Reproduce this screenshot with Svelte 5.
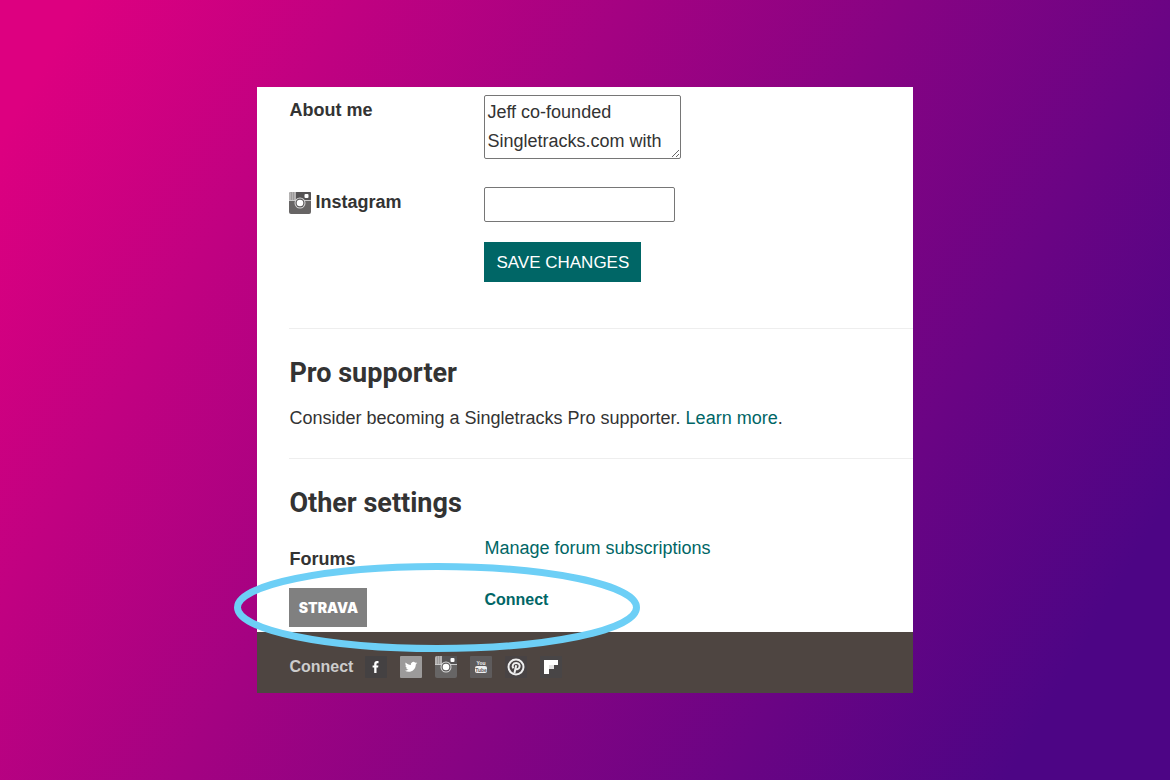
<script lang="ts">
  let about = $state("Jeff co-founded\nSingletracks.com with");
  let instagram = $state("");

  const socialLinks = [
    { id: "facebook", label: "Facebook" },
    { id: "twitter", label: "Twitter" },
    { id: "instagram", label: "Instagram" },
    { id: "youtube", label: "YouTube" },
    { id: "pinterest", label: "Pinterest" },
    { id: "flipboard", label: "Flipboard" },
  ];

  function save(event: SubmitEvent) {
    event.preventDefault();
  }
</script>

{#snippet icon(id: string)}
  <svg class="icon" viewBox="0 0 22 22" aria-hidden="true">
    {#if id === "facebook"}
      <rect width="22" height="22" rx="1" fill="#444142" />
      <path
        d="M9.2 17v-5.600H7.600V9.400h1.600V8c0-2 1.100-3 2.800-3h1.500v2.200h-1c-.7 0-1 .4-1 1v1.200h1.900l-.3 2h-1.600V17z"
        fill="#fff"
      />
    {:else if id === "twitter"}
      <rect width="22" height="22" rx="1" fill="#9c9a9a" />
      <path
        d="M17.200 7.100c-.5.2-1 .4-1.500.4.5-.3.9-.8 1.100-1.400-.5.3-1 .5-1.600.6a2.500 2.500 0 0 0-4.300 2.300C8.800 8.900 7 7.900 5.700 6.400c-.7 1.200-.3 2.600.8 3.300-.4 0-.8-.1-1.100-.3 0 1.200.8 2.200 2 2.500-.4.1-.8.1-1.100 0 .3 1 1.200 1.700 2.300 1.700-1 .8-2.300 1.200-3.700 1.100 4.800 2.900 10.900-.2 10.900-6.200.6-.4 1.100-.8 1.400-1.400z"
        fill="#fff"
      />
    {:else if id === "instagram"}
      <rect width="22" height="22" rx="2" fill="#676565" />
      <path d="M0 8V2a2 2 0 0 1 2-2h5v8z" fill="#b5b3b3" />
      <path d="M2.500 0v8M4.500 0v8" stroke="#9c9a9a" />
      <rect x="7" width="15" height="8" rx="1" fill="#555354" />
      <rect x="15.500" y="2" width="4" height="4" rx="1" fill="#fff" />
      <path d="M0 8.500h22" stroke="#ccc" />
      <circle cx="11" cy="11" r="5.500" fill="#d8d8d8" />
      <circle cx="11" cy="11" r="4.500" fill="#5c5a5b" />
      <circle cx="11" cy="11" r="3.300" fill="#fff" />
    {:else if id === "youtube"}
      <rect width="22" height="22" rx="1" fill="#5e5b5c" />
      <text x="11" y="9" class="you">You</text>
      <rect x="5" y="10" width="12" height="7" rx="2" fill="#eee" />
      <text x="11" y="15.500" class="tube">Tube</text>
    {:else if id === "pinterest"}
      <rect width="22" height="22" rx="1" fill="#484344" />
      <circle cx="11" cy="11" r="7.500" fill="none" stroke="#eee" stroke-width="2" />
      <path
        d="M8.500 12.200c-1.900-2-.5-5.200 2.700-5.200 2.500 0 3.900 1.900 3.300 4-.6 2.300-3.100 3-4 1.500M11.200 9.300 9.400 17.200"
        fill="none"
        stroke="#eee"
        stroke-width="2"
      />
    {:else}
      <rect width="22" height="22" rx="1" fill="#484546" />
      <path d="M4 4h14v5h-4v4H9v5H4z" fill="#fff" />
      <path d="M9 9h5v4H9z" fill="#e4e3e3" />
    {/if}
  </svg>
{/snippet}

<main class="page">
  <div class="card">
    <div class="settings">
      <form class="profile" onsubmit={save}>
        <label class="field-label" for="about">About me</label>
        <textarea id="about" rows="2" bind:value={about}></textarea>

        <label class="field-label instagram-label" for="instagram">
          {@render icon("instagram")}
          Instagram
        </label>
        <input id="instagram" type="text" bind:value={instagram} />

        <button class="save" type="submit">SAVE CHANGES</button>
      </form>

      <section class="supporter">
        <h2>Pro supporter</h2>
        <p>
          Consider becoming a Singletracks Pro supporter. <a href="#pro">Learn more</a>.
        </p>
      </section>

      <section>
        <h2>Other settings</h2>
        <div class="row">
          <strong class="forums">Forums</strong>
          <a href="#forums">Manage forum subscriptions</a>
        </div>
        <div class="row strava-row">
          <span class="strava">STRAVA</span>
          <a class="connect" href="#strava">Connect</a>
          <svg class="highlight" viewBox="0 0 406 89" aria-hidden="true">
            <ellipse cx="203" cy="44.500" rx="199.500" ry="41" />
          </svg>
        </div>
      </section>
    </div>

    <footer>
      <strong>Connect</strong>
      <nav aria-label="Social media">
        {#each socialLinks as link (link.id)}
          <a href="#{link.id}" aria-label={link.label}>{@render icon(link.id)}</a>
        {/each}
      </nav>
    </footer>
  </div>
</main>

<style>
  :global(body) {
    margin: 0;
  }

  .page {
    display: flex;
    align-items: center;
    justify-content: center;
    min-height: 100vh;
    background: linear-gradient(120deg, #dd0080 5%, #4d0585 90%);
    color: #333;
    font-family: "Liberation Sans", Arial, sans-serif;
    font-size: 18px;
    line-height: 29px;
  }

  .card {
    width: 56%;
    background: #fff;
  }

  .settings {
    padding: 8px 0 5px 32px;
  }

  .profile {
    display: grid;
    grid-template-columns: 195px 1fr;
    justify-items: start;
    align-items: start;
    padding-bottom: 46px;
  }

  .field-label {
    padding-top: 1px;
    font-weight: bold;
  }

  .instagram-label {
    display: flex;
    align-items: center;
    gap: 4px;
  }

  .icon {
    display: block;
    width: 22px;
    height: 22px;
  }

  textarea,
  input {
    box-sizing: border-box;
    border: 1px solid #767676;
    border-radius: 2px;
    padding: 2px;
    background: #fff;
    color: #333;
    font: inherit;
  }

  textarea {
    width: 197px;
    height: 64px;
    margin-bottom: 28px;
    overflow: hidden;
  }

  input {
    width: 191px;
    height: 35px;
    margin-bottom: 20px;
  }

  .save {
    grid-column: 2;
    height: 40px;
    padding: 0 12px;
    border: 0;
    background: #006666;
    color: #fff;
    font: inherit;
    font-size: 17px;
    cursor: pointer;
  }

  section {
    border-top: 1px solid #eee;
    padding-top: 25px;
  }

  .supporter {
    padding-bottom: 25px;
  }

  h2 {
    margin: 0 0 12px;
    font-family: Roboto, sans-serif;
    font-size: 27px;
    font-weight: 700;
    line-height: 38px;
  }

  p {
    margin: 0;
  }

  a {
    color: #006666;
    text-decoration: none;
  }

  .row {
    display: grid;
    grid-template-columns: 195px 1fr;
    align-items: start;
  }

  .forums {
    padding-top: 11px;
  }

  .strava-row {
    position: relative;
    padding-top: 14px;
  }

  .strava {
    width: 78px;
    background: #808080;
    color: #fff;
    font-family: Inter, sans-serif;
    font-size: 14px;
    font-weight: 900;
    line-height: 39px;
    text-align: center;
  }

  .connect {
    font-size: 16px;
    font-weight: bold;
    line-height: 24px;
  }

  /* marker ring around the Strava row */
  .highlight {
    position: absolute;
    top: -11px;
    left: -55px;
    width: 406px;
    height: 89px;
    pointer-events: none;
  }

  .highlight ellipse {
    fill: none;
    stroke: #6dcff6;
    stroke-width: 7px;
  }

  footer {
    display: flex;
    align-items: center;
    gap: 12px;
    padding: 20px 32px 12px;
    background: #4e4541;
    color: #ccc;
    font-size: 16px;
  }

  nav {
    display: flex;
    gap: 13px;
  }

  .you,
  .tube {
    font-size: 5px;
    font-weight: bold;
    text-anchor: middle;
  }

  .you {
    fill: #eee;
  }

  .tube {
    fill: #5e5b5c;
  }
</style>
